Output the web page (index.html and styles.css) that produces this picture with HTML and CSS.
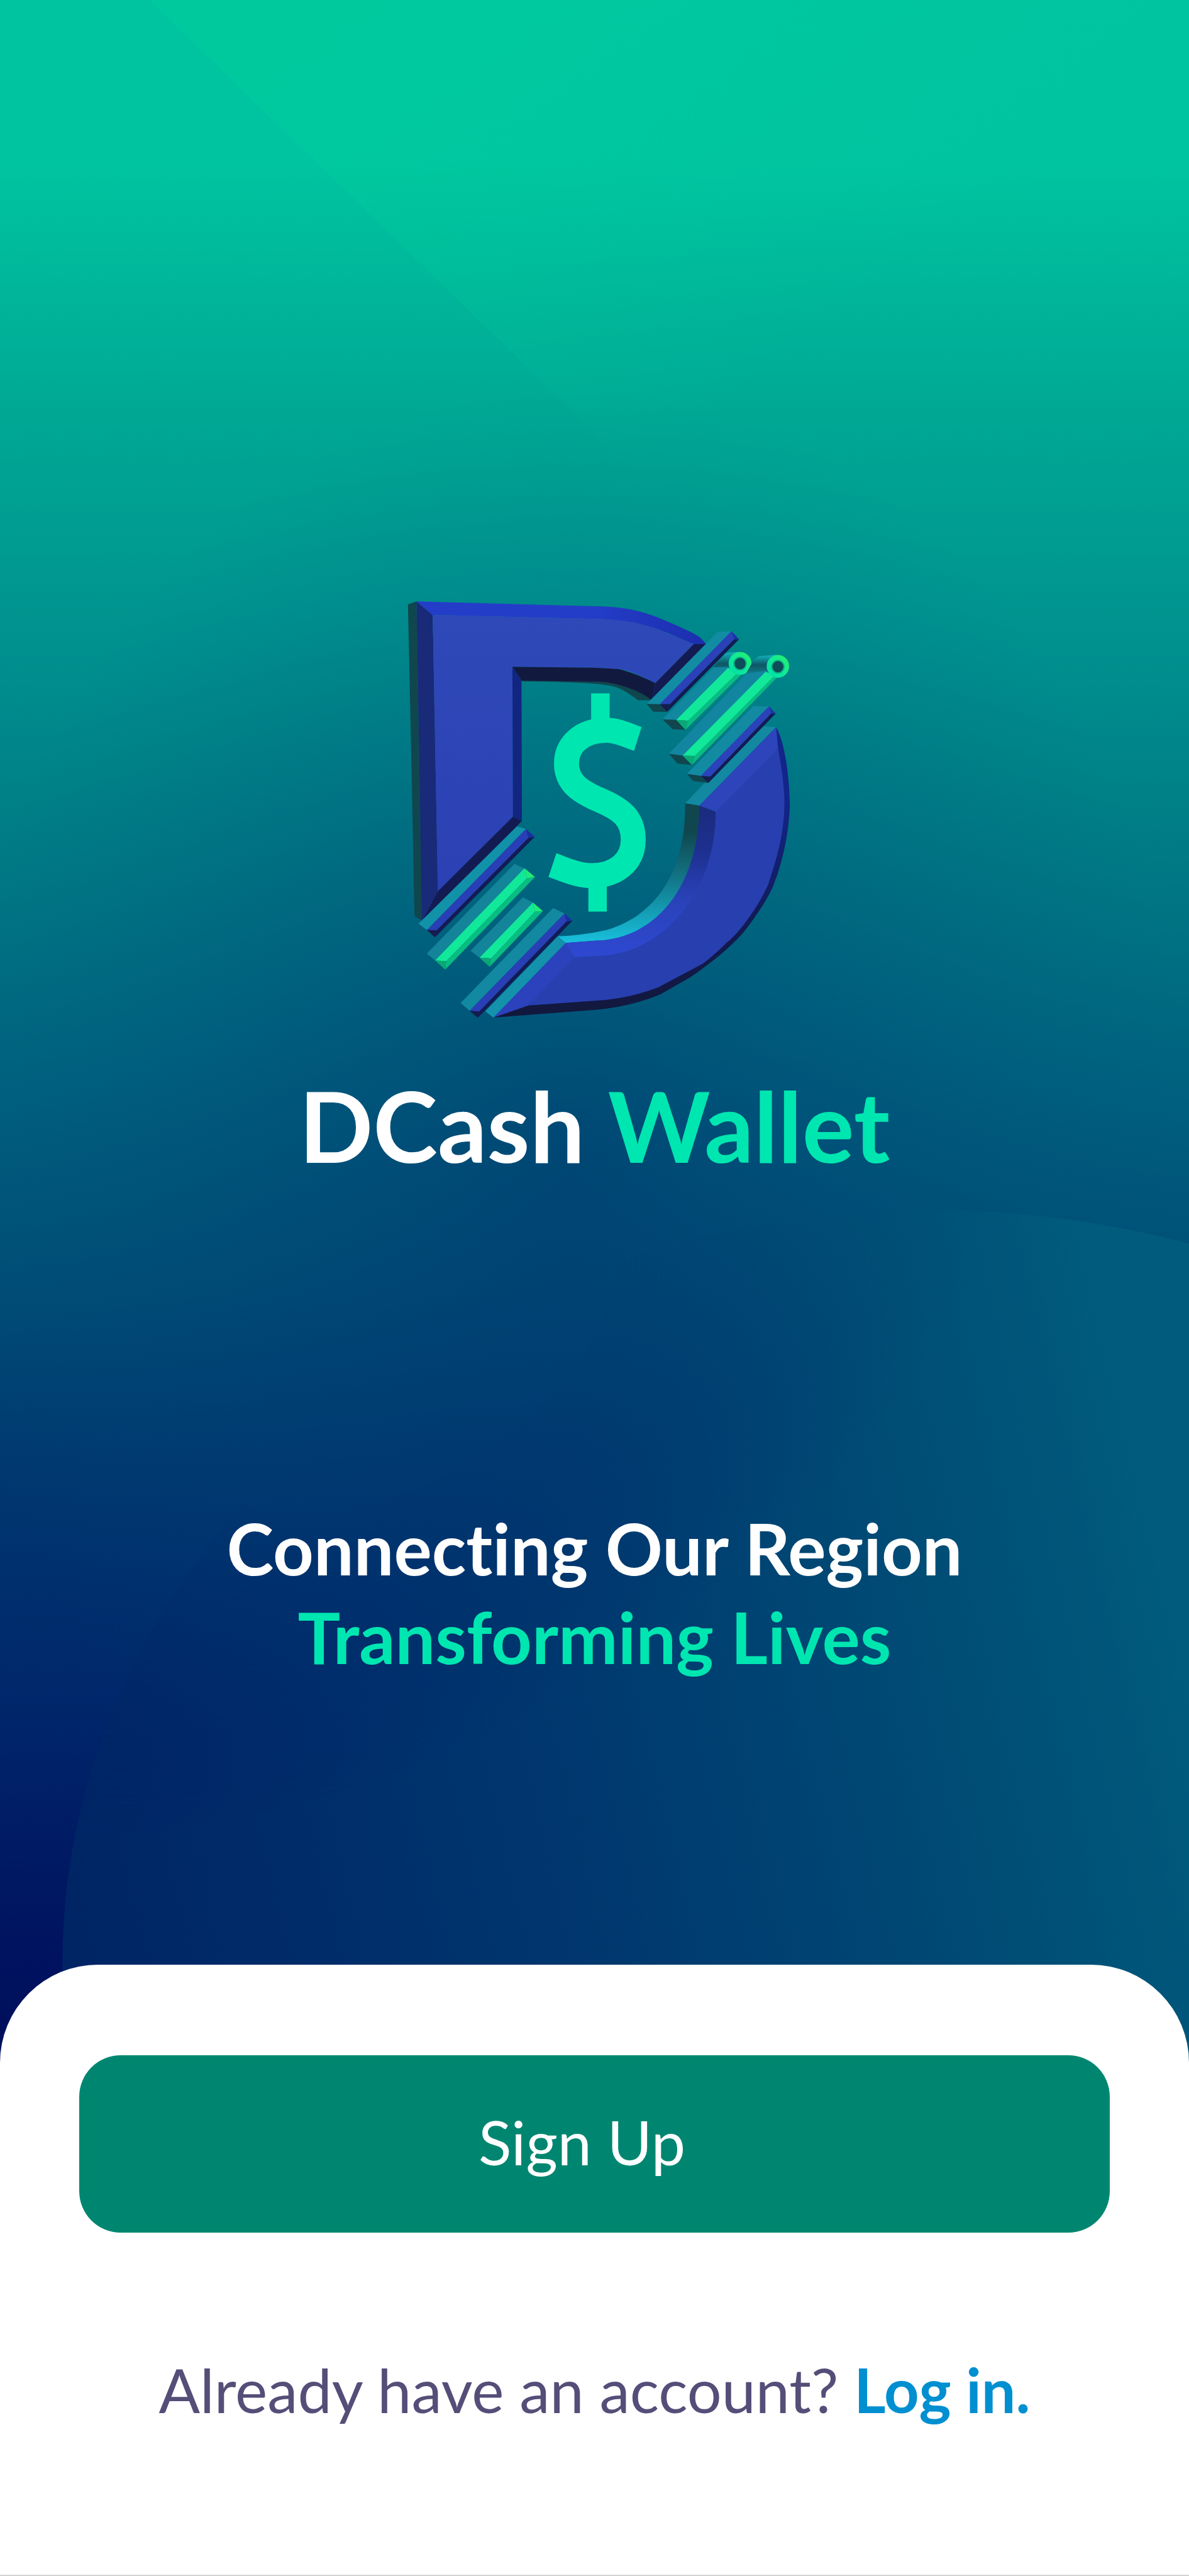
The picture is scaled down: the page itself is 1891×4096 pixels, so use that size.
FILE: index.html
```html
<!DOCTYPE html>
<html lang="en">
<head>
<meta charset="utf-8">
<meta name="viewport" content="width=device-width, initial-scale=1">
<title>DCash Wallet</title>
<link rel="stylesheet" href="styles.css">
</head>
<body>
<main class="screen">
  <svg class="backdrop" viewBox="0 0 2000 4331" preserveAspectRatio="none" aria-hidden="true">
    <defs>
      <linearGradient id="sky" x1="0" y1="0" x2="0" y2="1">
        <stop offset="0" stop-color="#00c4a0"/>
        <stop offset=".063" stop-color="#00c4a0"/>
        <stop offset=".15" stop-color="#00ab95"/>
        <stop offset=".231" stop-color="#009690"/>
        <stop offset=".346" stop-color="#007684"/>
        <stop offset=".439" stop-color="#005c7d"/>
        <stop offset=".5" stop-color="#004d77"/>
        <stop offset=".562" stop-color="#003a70"/>
        <stop offset=".624" stop-color="#002d6d"/>
        <stop offset=".66" stop-color="#00276b"/>
        <stop offset=".69" stop-color="#002067"/>
        <stop offset=".715" stop-color="#001b64"/>
        <stop offset=".755" stop-color="#001360"/>
        <stop offset=".79" stop-color="#000f5c"/>
      </linearGradient>
      <radialGradient id="shade" gradientUnits="userSpaceOnUse" cx="0" cy="0" r="1" gradientTransform="translate(960 1950) scale(1050 1300)">
        <stop offset="0" stop-color="#002a68" stop-opacity=".4"/>
        <stop offset=".5" stop-color="#003a70" stop-opacity=".23"/>
        <stop offset="1" stop-color="#004a76" stop-opacity="0"/>
      </radialGradient>
      <linearGradient id="beam" gradientUnits="userSpaceOnUse" x1="560" y1="0" x2="1130" y2="750">
        <stop offset="0" stop-color="#00d09c" stop-opacity=".42"/>
        <stop offset="1" stop-color="#00d09c" stop-opacity="0"/>
      </linearGradient>
      <linearGradient id="disc" gradientUnits="userSpaceOnUse" x1="105" y1="3300" x2="2000" y2="2850">
        <stop offset="0" stop-color="#002464"/>
        <stop offset=".3" stop-color="#00306b"/>
        <stop offset=".5" stop-color="#003a6f"/>
        <stop offset=".73" stop-color="#004874"/>
        <stop offset=".94" stop-color="#00567a"/>
        <stop offset="1" stop-color="#005b7d"/>
      </linearGradient>
      <radialGradient id="melt" gradientUnits="userSpaceOnUse" cx="0" cy="0" r="1" gradientTransform="translate(680 2260) rotate(-33) scale(1150 640)">
        <stop offset=".35" stop-color="#000"/>
        <stop offset="1" stop-color="#fff"/>
      </radialGradient>
      <mask id="discMask" maskUnits="userSpaceOnUse" x="0" y="2000" width="2000" height="2331">
        <rect y="2000" width="2000" height="2331" fill="url(#melt)"/>
      </mask>
    </defs>
    <rect width="2000" height="4331" fill="url(#sky)"/>
    <rect width="2000" height="4331" fill="url(#shade)"/>
    <path d="M251 0H1940Q1880 250 1850 360L1700 900H1178Z" fill="url(#beam)"/>
    <ellipse cx="1570" cy="3300" rx="1465" ry="1265" fill="url(#disc)" mask="url(#discMask)"/>
  </svg>

  <header class="hero">
    <svg class="logo" viewBox="30 90 1980 2115" role="img" aria-label="DCash logo">
      <defs>
        <linearGradient id="topBevel" x1="0" x2="1" y1="0" y2="0"><stop offset=".6" stop-color="#243dc8"/><stop offset="1" stop-color="#1b2eae"/></linearGradient>
        <linearGradient id="face" x1="0" x2="0" y1="0" y2="1"><stop offset="0" stop-color="#2f49b8"/><stop offset="1" stop-color="#2b40b4"/></linearGradient>
        <linearGradient id="outerBevel" x1="0" x2="0" y1="0" y2="1"><stop offset=".25" stop-color="#12258a"/><stop offset=".7" stop-color="#121a50"/><stop offset="1" stop-color="#12183c"/></linearGradient>
        <linearGradient id="innerBevel" x1="0" x2="0" y1="0" y2="1"><stop offset="0" stop-color="#1a2b7c"/><stop offset=".3" stop-color="#1d3090"/><stop offset=".62" stop-color="#2a42b8"/><stop offset="1" stop-color="#2f48d2"/></linearGradient>
        <linearGradient id="rim" x1="0" x2="0" y1="0" y2="1"><stop offset=".2" stop-color="#10464e"/><stop offset=".5" stop-color="#127080"/><stop offset=".78" stop-color="#149db5"/><stop offset="1" stop-color="#18c0dc"/></linearGradient>
        <linearGradient id="tube" x1="0" x2="0" y1="0" y2="1"><stop offset="0" stop-color="#12b4bd"/><stop offset=".5" stop-color="#0e5766"/><stop offset="1" stop-color="#107c8a"/></linearGradient>
        <linearGradient id="ring" x1="0" x2="1" y1="1" y2="0"><stop offset="0" stop-color="#00e0a8"/><stop offset=".5" stop-color="#12e998"/><stop offset="1" stop-color="#22f070"/></linearGradient>
      </defs>

      <!-- upper-left half of the D -->
      <path fill="#10464e" d="M77 112 120 97 138 1140 150 1710 110 1685 98 1080Z"/>
      <path fill="#182a78" d="M120 97 202 166 228 1560 148 1710 137 1080Z"/>
      <path fill="url(#topBevel)" d="M120 97 1020 122C1210 122 1310 166 1390 200C1460 230 1530 262 1550 278L1582 312H1520C1400 270 1300 192 1020 186L202 166Z"/>
      <path fill="url(#face)" d="M202 166 1020 186C1280 190 1340 244 1520 312L1325 510C1240 466 1180 438 1130 438L1020 432 604 427 607 1183 228 1560Z"/>
      <path fill="#10464e" d="M650 490H1020L1200 500 1307 590V596H1240C1190 562 1150 525 1070 518Q980 504 650 500Z"/>
      <path fill="#12193f" d="M604 427 1020 432 1135 438C1190 448 1270 480 1325 510L1307 594C1220 530 1100 500 1020 502L650 497Z"/>
      <path fill="#122580" d="M604 427 650 497 652 1205 607 1183Z"/>
      <path fill="#131b52" d="M607 1183 652 1205 148 1710 228 1560ZM1520 312H1582L1307 594 1325 510Z"/>

      <!-- lower-right half of the D -->
      <g transform="translate(1020 1080)">
        <path fill="#1289a0" d="M850-353 915-349 527 48 456 36 553-67Z"/>
        <path fill="url(#outerBevel)" d="M915-349C960-270 984-90 984 50C980 190 945 340 905 440C880 510 780 660 720 720C640 800 560 860 480 915L330 1000Q180 1062 0 1078L-512 1117-335 1040 0 1000 400 850 750 500 900 0Z"/>
        <path fill="#283fb0" d="M925-240C950-100 957-30 957 40C955 160 935 270 875 445C830 550 730 690 670 735Q600 805 545 845L320 965Q160 1025 0 1032L-335 1056-102 812 0 806C340 800 610 470 610 78Z"/>
        <path fill="#2d44ba" d="M915-349 925-240 610 78 527 48Z"/>
        <path fill="#2b42bc" d="M-147 740-102 812-335 1056-512 1117Z"/>
        <path fill="url(#rim)" d="M-190 707Q-60 702 60 675C310 600 460 380 456 36L527 48C530 480 300 730 0 729L-147 740Z"/>
        <path fill="url(#innerBevel)" d="M-147 740 0 729C320 722 527 440 527 48L610 78C610 480 350 804 0 806L-102 812Z"/>
        <path fill="#1492ab" d="M-190 710-147 740-512 1117-553 1085Z"/>
      </g>

      <!-- upper-right circuit bars -->
      <g transform="translate(1020 0)">
        <path fill="#128ca3" d="M618 253 690 247 328 616 262 614Z"/>
        <path fill="#10464e" d="M262 614 328 616 365 655 295 654Z"/>
        <path fill="#2b41b8" d="M690 247 703 288 380 614 328 616Z"/>
        <path fill="#1d31aa" d="M690 247 728 288 703 288Z"/>
        <path fill="#121b55" d="M703 288H728L365 655 380 614Z"/>
        <path fill="#161c4c" d="M328 616 380 614 365 655Z"/>

        <path fill="url(#tube)" d="M728 352 675 356 658 360 595 430 690 430 728 470Z"/>
        <path fill="#1287a0" d="M600 430 680 427 411 695 341 692Z"/>
        <path fill="#10464e" d="M341 692 411 695 457 745 393 742Z"/>
        <path fill="#12e89a" d="M672 433 735 455 470 699 411 695Z"/>
        <path fill="#08bd82" d="M725 452 740 466 457 745 470 699Z"/>
        <path fill="#0aa874" d="M411 695 470 699 457 745Z"/>
        <ellipse cx="733" cy="410" rx="44" ry="44" fill="#0c4d58" stroke="url(#ring)" stroke-width="27"/>
        <ellipse cx="733" cy="411" rx="31" ry="32" fill="none" stroke="#05b986" stroke-width="6"/>

        <path fill="url(#tube)" d="M920 367 830 373Q802 385 795 405L760 466 880 452Z"/>
        <path fill="#1285a0" d="M768 460 870 446 443 875 373 866Z"/>
        <path fill="#10464e" d="M373 866 443 875 490 922 418 916Z"/>
        <path fill="#12e89a" d="M862 452 912 473 505 877 443 875Z"/>
        <path fill="#08bd82" d="M908 470 920 480 490 922 505 877Z"/>
        <path fill="#0aa874" d="M443 875 505 877 490 922Z"/>
        <ellipse cx="924" cy="425" rx="43" ry="44" fill="#0c4d58" stroke="url(#ring)" stroke-width="27"/>
        <ellipse cx="924" cy="427" rx="31" ry="32" fill="none" stroke="#05b986" stroke-width="6"/>

        <path fill="#128aa2" d="M800 625 878 627 535 978 464 967Z"/>
        <path fill="#10464e" d="M464 967 535 978 573 1013 496 1003Z"/>
        <path fill="#2c42ba" d="M878 627 890 663 583 981 535 978Z"/>
        <path fill="#1d31aa" d="M878 627 913 663H890Z"/>
        <path fill="#121b55" d="M890 663H913L573 1013 583 981Z"/>
        <path fill="#161c4c" d="M535 978 583 981 573 1013Z"/>
      </g>

      <!-- lower-left circuit bars -->
      <g transform="translate(0 1080)">
        <path fill="#1292a8" d="M628 152 672 166 173 675 130 643Z"/>
        <path fill="#283fb6" d="M672 166 685 210 222 677 173 675Z"/>
        <path fill="#1b2ea4" d="M672 166 717 205 685 210Z"/>
        <path fill="#121b55" d="M685 210 717 205 213 712 222 677Z"/>
        <path fill="#161c4c" d="M173 675 222 677 213 712Z"/>

        <path fill="#13849a" d="M614 342 665 363 214 829 172 794Z"/>
        <path fill="#12e89a" d="M665 363 677 415 270 833 214 829Z"/>
        <path fill="#1eec78" d="M665 363 718 408 677 415Z"/>
        <path fill="#08bd82" d="M677 415 718 408 265 875 270 833Z"/>
        <path fill="#0aa874" d="M214 829 270 833 265 875Z"/>

        <path fill="#13849a" d="M657 510 708 536 438 815 393 780Z"/>
        <path fill="#12e89a" d="M708 536 718 583 497 819 438 815Z"/>
        <path fill="#1eec78" d="M708 536 758 580 718 583Z"/>
        <path fill="#08bd82" d="M718 583 758 580 489 861 497 819Z"/>
        <path fill="#0aa874" d="M438 815 497 819 489 861Z"/>

        <path fill="#1289a0" d="M810 564 867 592 388 1083 343 1043Z"/>
        <path fill="#283fb6" d="M867 592 877 632 437 1086 388 1083Z"/>
        <path fill="#1b2ea4" d="M867 592 907 628 877 632Z"/>
        <path fill="#121b55" d="M877 632 907 628 430 1118 437 1086Z"/>
        <path fill="#161c4c" d="M388 1083 437 1086 430 1118Z"/>
      </g>

      <!-- currency mark -->
      <g fill="none" stroke="#00e6b0">
        <path stroke-width="93" d="M1048 561V720M1034 1500V1662"/>
        <path stroke-width="126" d="M1237 791C1190 776 1140 747 1080 747C955 747 877 820 877 915C877 1015 950 1060 1050 1102C1150 1145 1214 1190 1214 1300C1214 1412 1125 1481 1005 1481C930 1481 860 1446 806 1428"/>
      </g>
    </svg>
    <h1 class="brand">DCash <span class="accent">Wallet</span></h1>
    <p class="tagline">Connecting Our Region<br><span class="accent">Transforming Lives</span></p>
  </header>

  <section class="sheet">
    <button class="signup" type="button">Sign Up</button>
    <p class="login">Already have an account? <a href="#login">Log in.</a></p>
  </section>
</main>
</body>
</html>
```
FILE: styles.css
```css
* {
  box-sizing: border-box;
}

body {
  margin: 0;
  font-family: Lato, "Open Sans", sans-serif;
  font-variant-ligatures: none;
  background: #fff;
}

.screen {
  position: relative;
  display: flex;
  flex-direction: column;
  min-height: 100vh;
}

.backdrop {
  position: absolute;
  inset: 0;
  width: 100%;
  height: 100%;
}

.hero {
  position: relative;
  flex: 1;
  display: flex;
  flex-direction: column;
  align-items: center;
  padding-top: 954px;
  text-align: center;
}

.logo {
  width: 624px;
  max-width: 80%;
}

.brand {
  margin: 76px 0 0;
  font-size: 155px;
  line-height: 184px;
  font-weight: 700;
  color: #fff;
}

.tagline {
  margin: 510px 0 0;
  font-size: 113px;
  line-height: 141px;
  font-weight: 700;
  color: #fff;
}

.accent {
  color: #00e6b0;
}

.sheet {
  position: relative;
  display: flex;
  flex-direction: column;
  padding: 144px 126px 234px;
  border-radius: 156px 156px 0 0;
  border-bottom: 2px solid #d4d4d4;
  background: #fff;
}

.signup {
  height: 282px;
  padding: 0 40px 8px 0;
  border: 0;
  border-radius: 66px;
  background: #008670;
  color: #fff;
  font: inherit;
  font-size: 97px;
}

.login {
  margin: 190px 0 0;
  font-size: 97px;
  line-height: 120px;
  text-align: center;
  color: #544e78;
}

.login a {
  color: #008fd0;
  font-weight: 700;
  text-decoration: none;
}
```
